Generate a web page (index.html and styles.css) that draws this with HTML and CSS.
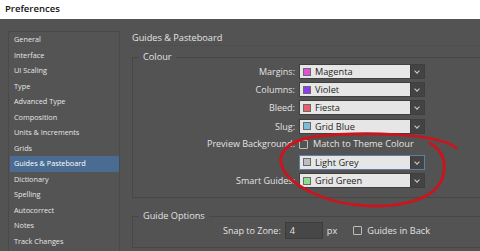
FILE: index.html
```html
<!DOCTYPE html>
<html lang="en">
<head>
  <meta charset="UTF-8" />
  <title>Preferences</title>
  <link rel="stylesheet" href="styles.css">
</head>
<body>

  <div class="titlebar">Preferences</div>

  <div class="window">
    <ul class="sidebar">
      <li>General</li>
      <li>Interface</li>
      <li>UI Scaling</li>
      <li>Type</li>
      <li>Advanced Type</li>
      <li>Composition</li>
      <li>Units &amp; Increments</li>
      <li>Grids</li>
      <li class="selected">Guides &amp; Pasteboard</li>
      <li>Dictionary</li>
      <li>Spelling</li>
      <li>Autocorrect</li>
      <li>Notes</li>
      <li>Track Changes</li>
    </ul>

    <div class="content">
      <h2 class="heading">Guides &amp; Pasteboard</h2>

      <fieldset class="group colour-group">
        <legend>Colour</legend>
        <div class="rows">
          <label class="label">Margins:</label>
          <div class="select"><span class="swatch" style="background:#e04fd8"></span><span class="value">Magenta</span><span class="arrow"></span></div>

          <label class="label">Columns:</label>
          <div class="select"><span class="swatch" style="background:#8c3cf0"></span><span class="value">Violet</span><span class="arrow"></span></div>

          <label class="label">Bleed:</label>
          <div class="select"><span class="swatch" style="background:#ea5e6a"></span><span class="value">Fiesta</span><span class="arrow"></span></div>

          <label class="label">Slug:</label>
          <div class="select"><span class="swatch" style="background:#7cbcd8"></span><span class="value">Grid Blue</span><span class="arrow"></span></div>

          <label class="label short">Preview Background:</label>
          <div class="check short"><span class="box"></span>Match to Theme Colour</div>

          <span></span>
          <div class="select focused"><span class="swatch" style="background:#bdbdbd"></span><span class="value">Light Grey</span><span class="arrow"></span></div>

          <label class="label">Smart Guides:</label>
          <div class="select"><span class="swatch" style="background:#8edc8e"></span><span class="value">Grid Green</span><span class="arrow"></span></div>
        </div>
      </fieldset>

      <fieldset class="group options-group">
        <legend>Guide Options</legend>
        <div class="options">
          <label class="label">Snap to Zone:</label>
          <div class="number">4</div>
          <span class="unit">px</span>
          <div class="check"><span class="box"></span>Guides in Back</div>
        </div>
      </fieldset>
    </div>

    <!-- red marker circle drawn over the dialog -->
    <svg class="scribble" width="480" height="251" viewBox="0 0 480 251">
      <path d="M456 148 C 440 133, 360 131, 312 137 C 289 141, 279 152, 281 163 C 285 184, 326 205, 370 206 C 410 207, 438 196, 443 176 C 447 160, 442 150, 430 143"
            fill="none" stroke="#c8161f" stroke-width="3" stroke-linecap="round"/>
    </svg>
  </div>

</body>
</html>
```

FILE: styles.css
```css
body {
  margin: 0;
  width: 480px;
  height: 251px;
  overflow: hidden;
  font-family: "Open Sans", "Noto Sans", sans-serif;
  background: #535353;
}

.titlebar {
  height: 19px;
  line-height: 17px;
  padding-left: 5px;
  background: #ffffff;
  color: #111;
  font-size: 9.5px;
  font-weight: 600;
}

.window {
  position: relative;
  display: flex;
  height: 232px;
  padding: 12px 0 0 8px;
  box-sizing: border-box;
  background: #535353;
  color: #dedede;
}

.sidebar {
  list-style: none;
  margin: 0;
  padding: 0 0 0 1px;
  width: 112px;
  flex-shrink: 0;
  border: 1px solid #4a4a4a;
  border-bottom: none;
  box-sizing: border-box;
  background: #545454;
}

.sidebar li {
  height: 15.5px;
  line-height: 15.5px;
  padding-left: 4px;
  font-size: 7.3px;
  color: #e6e6e6;
  white-space: nowrap;
}

.sidebar li.selected {
  background: #4a6c92;
  color: #fff;
}

.content {
  flex: 1;
  padding-left: 12px;
  margin-right: -20px;
}

.heading {
  margin: 0;
  height: 14px;
  line-height: 14px;
  font-size: 9.2px;
  font-weight: normal;
  color: #e4e4e4;
  border-bottom: 1px solid #4e4e4e;
}

.group {
  margin: 0;
  border: 1px solid #474747;
  padding: 0;
  min-width: 0;
}

.group legend {
  margin-left: 6px;
  padding: 0 4px;
  font-size: 9.2px;
  line-height: 12px;
  color: #e2e2e2;
}

.colour-group {
  margin-top: 5px;
  padding: 1px 0 9px;
}

.rows {
  display: grid;
  grid-template-columns: 162px 126px;
  grid-auto-rows: 15px;
  row-gap: 3.2px;
  column-gap: 4px;
  align-items: center;
}

.label {
  text-align: right;
  font-size: 9px;
  color: #e2e2e2;
  white-space: nowrap;
}

.rows .short {
  height: 10px;
  line-height: 10px;
}

.rows .label.short + .check {
  height: 10px;
}

.select {
  display: flex;
  align-items: center;
  height: 15px;
  background: #e6e6e6;
  border: 1px solid #3f3f3f;
  box-sizing: border-box;
  color: #1e1e1e;
  font-size: 9.2px;
}

.select.focused {
  border-color: #5d7fa6;
}

.swatch {
  width: 8px;
  height: 8px;
  margin: 0 4px 0 3px;
  border: 1px solid #6a6a6a;
  box-sizing: border-box;
}

.value {
  flex: 1;
}

.arrow {
  position: relative;
  width: 13px;
  height: 100%;
  background: #434343;
  border-left: 1px solid #3a3a3a;
}

.arrow::after {
  content: "";
  position: absolute;
  left: 4px;
  top: 4px;
  width: 3px;
  height: 3px;
  border-right: 1px solid #cfcfcf;
  border-bottom: 1px solid #cfcfcf;
  transform: rotate(45deg);
}

.check {
  display: flex;
  align-items: center;
  gap: 5px;
  font-size: 9.2px;
  color: #e2e2e2;
  white-space: nowrap;
}

.box {
  width: 9px;
  height: 9px;
  border: 1px solid #bcbcbc;
  box-sizing: border-box;
  border-radius: 1px;
}

.options-group {
  margin-top: 12px;
  padding: 0 0 8px;
}

.options {
  display: flex;
  align-items: center;
  padding-left: 90px;
  gap: 4px;
}

.number {
  width: 38px;
  height: 17px;
  line-height: 15px;
  padding-left: 4px;
  box-sizing: border-box;
  background: #474747;
  border: 1px solid #3c3c3c;
  font-size: 9.2px;
  color: #e4e4e4;
}

.unit {
  font-size: 9.2px;
  color: #e2e2e2;
  margin-right: 12px;
}

.scribble {
  position: absolute;
  left: 0;
  top: -19px;
  pointer-events: none;
}
```
